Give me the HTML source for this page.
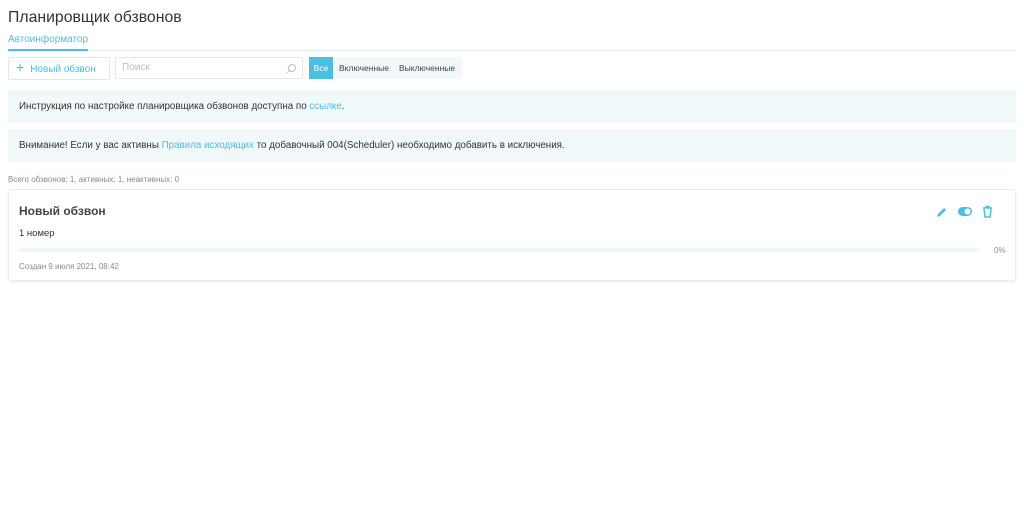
<!DOCTYPE html><html><head><meta charset="utf-8"><style>
body{margin:0;background:#fff;font-family:"Liberation Sans",sans-serif;color:#333;width:1024px;height:510px;overflow:hidden;position:relative}
.a{position:absolute}
</style></head><body>
<div class="a" style="left:8px;top:9px;font-size:15.8px;color:#333">Планировщик обзвонов</div>
<div class="a" style="left:8px;top:34px;font-size:10px;color:#4bbfe0">Автоинформатор</div>
<div class="a" style="left:8px;top:49px;width:80px;height:2px;background:#4bbfe0"></div>
<div class="a" style="left:88px;top:50px;width:928px;height:1px;background:#e3eef2"></div>
<div class="a" style="left:8px;top:57px;width:100px;height:21px;border:1px solid #e2e8ea;border-radius:2px;font-size:10px;color:#4bbfe0;line-height:19px"><span style="font-size:14px;margin:0 6px 0 7px">+</span>Новый обзвон</div>
<div class="a" style="left:115px;top:57px;border:1px solid #e2e8ea;border-radius:2px;font-size:10px;color:#bbb;line-height:20px;padding-left:6px;box-sizing:border-box;width:188px;height:22px">Поиск<svg class="a" style="right:5px;top:5px" width="11" height="11"><circle cx="6" cy="5" r="3.5" fill="none" stroke="#bbb"/><line x1="3.5" y1="7.5" x2="1" y2="10" stroke="#bbb"/></svg></div>
<div class="a" style="left:309px;top:57px;width:153px;height:22px;background:#f0f8fa"></div>
<div class="a" style="left:309px;top:57px;width:24px;height:22px;background:#4bbfe0;color:#fff;font-size:8.5px;line-height:22px;text-align:center">Все</div>
<div class="a" style="left:339px;top:63px;font-size:8.5px;color:#444">Включенные</div>
<div class="a" style="left:399px;top:63px;font-size:8.5px;color:#444">Выключенные</div>
<div class="a" style="left:8px;top:90px;width:1008px;height:33px;background:#f0f8fa;font-size:9.8px;line-height:33px;padding-left:11px;box-sizing:border-box">Инструкция по настройке планировщика обзвонов доступна по <span style="color:#4bbfe0">ссылке</span>.</div>
<div class="a" style="left:8px;top:129px;width:1008px;height:33px;background:#f0f8fa;font-size:9.8px;line-height:33px;padding-left:11px;box-sizing:border-box">Внимание! Если у вас активны <span style="color:#4bbfe0">Правила исходящих</span> то добавочный 004(Scheduler) необходимо добавить в исключения.</div>
<div class="a" style="left:8px;top:175px;font-size:8px;color:#888">Всего обзвонов: 1, активных: 1, неактивных: 0</div>
<div class="a" style="left:8px;top:189px;width:1008px;height:92px;border:1px solid #e8eef0;border-radius:3px;box-shadow:0 1px 2px rgba(0,0,0,.08);box-sizing:border-box"></div>
<div class="a" style="left:19px;top:204px;font-size:12px;font-weight:bold;color:#444">Новый обзвон</div>
<div class="a" style="left:19px;top:228px;font-size:9.5px;color:#333">1 номер</div>
<div class="a" style="left:19px;top:248px;width:961px;height:4px;background:#eef7fa;border-radius:2px"></div>
<div class="a" style="left:994px;top:246px;font-size:8px;color:#888">0%</div>
<div class="a" style="left:19px;top:262px;font-size:8px;color:#888">Создан 9 июля 2021, 08:42</div>
<svg class="a" style="left:935px;top:205px" width="60" height="14"><path d="M2 12l1-3 6-6 2 2-6 6z" fill="#4bbfe0"/><rect x="23" y="2" width="14" height="9" rx="4.5" fill="#4bbfe0"/><circle cx="32.5" cy="6.5" r="3" fill="#fff"/><path d="M48 3h9M51 3V1.5h3V3M49 4l1 8h5l1-8" fill="none" stroke="#4bbfe0" stroke-width="1.5"/></svg>
</body></html>
